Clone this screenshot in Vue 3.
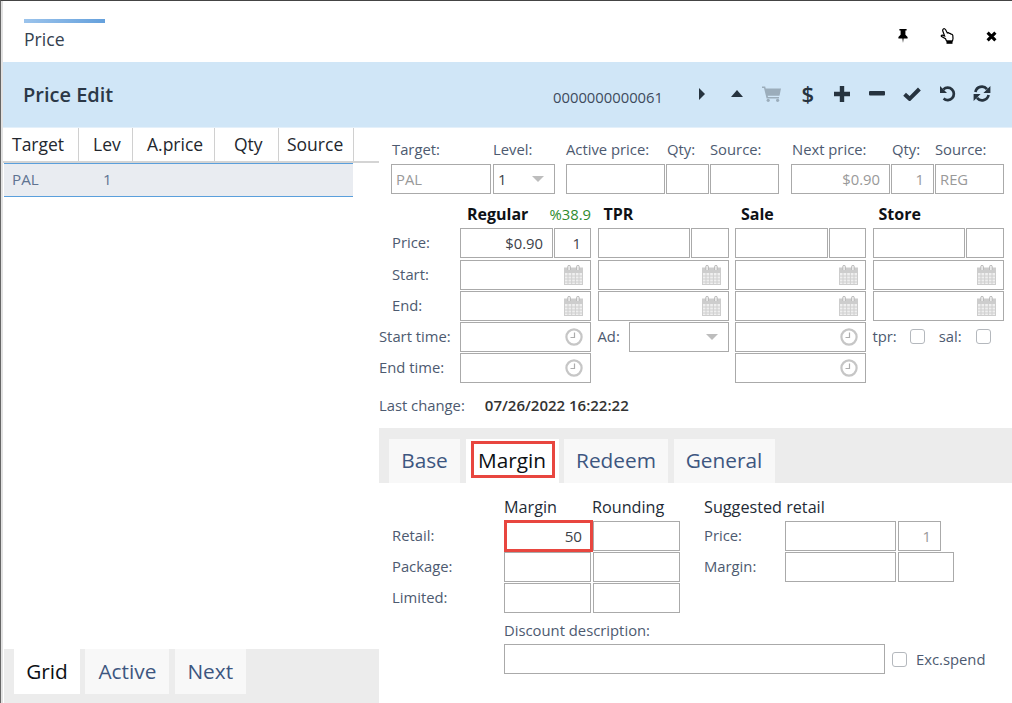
<template>
  <div class="window">
    <!-- shared icons -->
    <svg class="defs" width="0" height="0">
      <symbol id="cal" viewBox="0 0 19 20">
        <rect x="0.5" y="3" width="18" height="16.5" fill="#efefef" stroke="#cdcdcd" />
        <rect x="0" y="3" width="19" height="5" fill="#cdcdcd" />
        <path d="M4 8v11M7.7 8v11M11.4 8v11M15 8v11M1 11h17M1 14h17M1 17h17" stroke="#cfcfcf" fill="none" />
        <path d="M3.8 5V1.6a1.3 1.3 0 0 1 2.6 0V5M12.6 5V1.6a1.3 1.3 0 0 1 2.6 0V5" stroke="#b9b9b9" fill="#efefef" />
      </symbol>
      <symbol id="clock" viewBox="0 0 18 18">
        <circle cx="9" cy="9" r="7.6" fill="#fff" stroke="#c6c6c6" stroke-width="2.2" />
        <path d="M9.5 4.5v5H5.5" fill="none" stroke="#adadad" stroke-width="1.2" />
      </symbol>
    </svg>

    <div class="titlebar">
      <div class="title-tab">Price</div>
      <div class="win-icons">
        <span class="win-icon">
          <svg width="10" height="14" viewBox="0 0 10 14"><path d="M1.4 0h7.2v1.5H7.4v4.3l2.2 2.1v1.5H5.6L5 14l-.6-4.6H.4V7.9l2.2-2.1V1.5H1.4z" fill="#000" /></svg>
        </span>
        <span class="win-icon">
          <svg width="14" height="16" viewBox="0 0 14 16">
            <path d="M3.2 1.2C4 .4 5 .6 5.5 1.6L7.3 5c.7-.4 1.5-.2 1.9.4.7-.2 1.4.1 1.7.7.8-.1 1.7.4 1.9 1.3l.2 3.1-.5 2.5h-6l-1-2.2-3.9-2.2c-.7-.6-.2-1.6.7-1.5l2.3.9-1.8-5c-.3-.8-.1-1.3.4-1.8z" fill="#fff" stroke="#000" stroke-width="1.2" />
            <rect x="6.5" y="12.6" width="6" height="3.2" fill="#000" />
          </svg>
        </span>
        <span class="win-icon">
          <svg width="11" height="11" viewBox="0 0 11 11"><path d="M1.6 1.6l7.8 7.8M9.4 1.6L1.6 9.4" stroke="#000" stroke-width="3.1" fill="none" /></svg>
        </span>
      </div>
    </div>

    <div class="head">
      <div class="head-title">Price Edit</div>
      <div class="head-number">0000000000061</div>
      <div class="tools">
        <span class="tool"><svg width="6" height="12" viewBox="0 0 6 12"><path d="M0 0l6 6-6 6z" fill="#26333f" /></svg></span>
        <span class="tool"><svg width="12" height="7" viewBox="0 0 12 7"><path d="M0 7l6-7 6 7z" fill="#26333f" /></svg></span>
        <span class="tool">
          <svg width="19" height="16" viewBox="0 0 19 16"><path d="M0 .5h3.2l.5 2H19l-1.5 7.2H5.7l.3 1.4h11v1.4H4.6L2 1.9H0z" fill="#9badbb" /><circle cx="6.2" cy="14.3" r="1.6" fill="#9badbb" /><circle cx="15.6" cy="14.3" r="1.6" fill="#9badbb" /></svg>
        </span>
        <span class="tool dollar">$</span>
        <span class="tool"><svg width="16" height="16" viewBox="0 0 16 16"><path d="M8 0v16M0 8h16" stroke="#26333f" stroke-width="4.4" fill="none" /></svg></span>
        <span class="tool"><svg width="16" height="5" viewBox="0 0 16 5"><rect width="16" height="4.6" rx="1" fill="#26333f" /></svg></span>
        <span class="tool"><svg width="18" height="14" viewBox="0 0 18 14"><path d="M1.6 7.2l5 4.6L16.4 2" stroke="#26333f" stroke-width="4" fill="none" /></svg></span>
        <span class="tool">
          <svg width="17" height="17" viewBox="0 0 17 17"><path d="M4.4 4.4a6.2 6.2 0 1 1 .2 9.2" stroke="#26333f" stroke-width="2.7" fill="none" /><path d="M1 1v7h7z" fill="#26333f" /></svg>
        </span>
        <span class="tool">
          <svg width="18" height="17" viewBox="0 0 18 17"><path d="M2.4 7A6.6 6.6 0 0 1 14 4.2M15.6 10A6.6 6.6 0 0 1 4 12.8" stroke="#26333f" stroke-width="2.7" fill="none" /><path d="M17.4 1v7h-7zM.6 16V9h7z" fill="#26333f" /></svg>
        </span>
      </div>
    </div>

    <div class="main">
      <div class="left">
        <div class="grid-head">
          <div v-for="c in gridCols" :key="c.name" class="grid-cell" :style="{ width: c.width + 'px', paddingLeft: c.pad + 'px' }">{{ c.name }}</div>
        </div>
        <div class="grid-row">
          <span class="row-target">PAL</span>
          <span class="row-level">1</span>
        </div>
        <div class="tabbar left-tabs">
          <div v-for="t in leftTabs" :key="t.name" class="tab" :class="{ active: t.active }" :style="{ width: t.width + 'px' }">{{ t.name }}</div>
        </div>
      </div>

      <div class="right">
        <div class="top-row">
          <div class="field w100 ml12 lab1"><div class="label">Target:</div><div class="box muted">PAL</div></div>
          <div class="field w62 ml2">
            <div class="label">Level:</div>
            <div class="box">1<svg class="arrow" width="12" height="6" viewBox="0 0 12 6"><path d="M0 0h12L6 6z" fill="#bdbdbd" /></svg></div>
          </div>
          <div class="field w99 ml11"><div class="label">Active price:</div><div class="box"></div></div>
          <div class="field w43 ml1 lab1"><div class="label">Qty:</div><div class="box"></div></div>
          <div class="field w69 ml1"><div class="label">Source:</div><div class="box"></div></div>
          <div class="field w99 ml12 lab1"><div class="label">Next price:</div><div class="box muted end">$0.90</div></div>
          <div class="field w43 ml1 lab1"><div class="label">Qty:</div><div class="box muted end">1</div></div>
          <div class="field w69 ml1"><div class="label">Source:</div><div class="box muted">REG</div></div>
        </div>

        <div class="price-grid">
          <div></div>
          <div class="col-head first"><b>Regular</b><span class="pct">%38.9</span></div>
          <div class="col-head"><b>TPR</b></div>
          <div class="col-head"><b>Sale</b></div>
          <div class="col-head"><b>Store</b></div>

          <div class="label pad">Price:</div>
          <div v-for="(p, i) in prices" :key="i" class="pair">
            <div class="box end grow">{{ p.price }}</div>
            <div class="box end" :style="{ width: p.qtyWidth + 'px' }">{{ p.qty }}</div>
          </div>

          <template v-for="row in ['Start:', 'End:']" :key="row">
            <div class="label pad">{{ row }}</div>
            <div v-for="n in 4" :key="n" class="box"><svg class="cal"><use href="#cal" /></svg></div>
          </template>

          <div class="label">Start time:</div>
          <div class="box"><svg class="clock"><use href="#clock" /></svg></div>
          <div class="ad">
            <span class="label">Ad:</span>
            <div class="box ad-select"><svg class="arrow" width="12" height="6" viewBox="0 0 12 6"><path d="M0 0h12L6 6z" fill="#bdbdbd" /></svg></div>
          </div>
          <div class="box"><svg class="clock"><use href="#clock" /></svg></div>
          <div class="flags">
            <span class="label">tpr:</span><span class="check flag-a"></span>
            <span class="label flag-b">sal:</span><span class="check flag-c"></span>
          </div>

          <div class="label">End time:</div>
          <div class="box"><svg class="clock"><use href="#clock" /></svg></div>
          <div></div>
          <div class="box"><svg class="clock"><use href="#clock" /></svg></div>
          <div></div>
        </div>

        <div class="last-change">
          <span class="label">Last change:</span>
          <span class="stamp">07/26/2022 16:22:22</span>
        </div>

        <div class="tabbar right-tabs">
          <div v-for="t in rightTabs" :key="t.name" class="tab" :class="{ active: t.active, marked: t.active }" :style="{ width: t.width + 'px' }">{{ t.name }}</div>
        </div>

        <div class="lower">
          <div class="margin-grid">
            <div></div>
            <div class="sub-head">Margin</div>
            <div class="sub-head shift">Rounding</div>

            <div class="label pad">Retail:</div>
            <div class="box end marked-box">50</div>
            <div class="box"></div>

            <div class="label pad">Package:</div>
            <div class="box"></div>
            <div class="box"></div>

            <div class="label pad">Limited:</div>
            <div class="box"></div>
            <div class="box"></div>
          </div>

          <div class="suggest-grid">
            <div class="sub-head wide">Suggested retail</div>

            <div class="label">Price:</div>
            <div class="box"></div>
            <div class="box muted end qty-short">1</div>

            <div class="label">Margin:</div>
            <div class="box"></div>
            <div class="box"></div>
          </div>
        </div>

        <div class="discount">
          <div class="label">Discount description:</div>
          <div class="discount-row">
            <div class="box discount-input"></div>
            <span class="check"></span>
            <span class="label exc">Exc.spend</span>
          </div>
        </div>
      </div>
    </div>
  </div>
</template>

<script setup>
const gridCols = [
  { name: 'Target', width: 76, pad: 9 },
  { name: 'Lev', width: 54, pad: 14 },
  { name: 'A.price', width: 82, pad: 14 },
  { name: 'Qty', width: 64, pad: 19 },
  { name: 'Source', width: 75, pad: 8 }
]

const leftTabs = [
  { name: 'Grid', width: 66, active: true },
  { name: 'Active', width: 84 },
  { name: 'Next', width: 71 }
]

const rightTabs = [
  { name: 'Base', width: 71 },
  { name: 'Margin', width: 93, active: true },
  { name: 'Redeem', width: 104 },
  { name: 'General', width: 101 }
]

const prices = [
  { price: '$0.90', qty: '1', qtyWidth: 37 },
  { price: '', qty: '', qtyWidth: 38 },
  { price: '', qty: '', qtyWidth: 37 },
  { price: '', qty: '', qtyWidth: 38 }
]
</script>

<style>
html,
body {
  margin: 0;
  background: #fff;
}
</style>

<style scoped>
.window {
  width: 1012px;
  height: 703px;
  box-sizing: border-box;
  border-top: 1px solid #444;
  border-left: 1px solid #666;
  padding-left: 2px;
  box-shadow: inset 2px 0 0 #e2e2e2;
  display: flex;
  flex-direction: column;
  font-family: "Open Sans", "Noto Sans", sans-serif;
  font-size: 14.8px;
  color: #4d5a70;
  background: #fff;
  overflow: hidden;
}

.defs {
  position: absolute;
}

.titlebar {
  height: 61px;
  flex: none;
  display: flex;
  justify-content: space-between;
  padding-left: 21px;
}

.title-tab {
  margin-top: 18px;
  width: 81px;
  height: 38px;
  box-sizing: border-box;
  padding-top: 5px;
  border-top: 4px solid #7fb0e3;
  border-image: linear-gradient(90deg, #9cc4ec, #64a0dc) 1;
  font-size: 17.6px;
  line-height: 22px;
  color: #34404e;
}

.win-icons {
  display: flex;
  margin-top: 13px;
  margin-right: -1px;
  height: 44px;
}

.win-icon {
  width: 44px;
  display: flex;
  align-items: center;
  justify-content: center;
}

.head {
  height: 65px;
  flex: none;
  display: flex;
  align-items: center;
  background: #d0e6f7;
  border-bottom: 1px solid #e4f0fa;
  padding-left: 20px;
}

.head-title {
  width: 530px;
  font-size: 20px;
  font-weight: 600;
  color: #2b3847;
}

.head-number {
  width: 131px;
  font-size: 14.8px;
  color: #3d4a5c;
  margin-top: 5px;
}

.tools {
  display: flex;
  margin-top: -2px;
}

.tool {
  width: 35.1px;
  height: 24px;
  display: flex;
  align-items: center;
  justify-content: center;
}

.dollar {
  font-size: 22px;
  font-weight: 600;
  color: #26333f;
  padding-left: 2px;
  box-sizing: border-box;
  margin-top: -1px;
}

.main {
  flex: 1;
  display: flex;
  min-height: 0;
}

.left {
  width: 376px;
  flex: none;
  display: flex;
  flex-direction: column;
}

.grid-head {
  display: flex;
  height: 33px;
  box-sizing: content-box;
  border-bottom: 2px solid #d4d4d4;
  font-size: 17.5px;
  color: #23272e;
}

.grid-cell {
  box-sizing: border-box;
  height: 33px;
  line-height: 33px;
  border-right: 1px solid #d0d0d0;
  white-space: nowrap;
}

.grid-row {
  width: 349px;
  height: 34px;
  margin-left: 1px;
  box-sizing: border-box;
  display: flex;
  align-items: center;
  padding-bottom: 2px;
  background: #e9ecf1;
  border-top: 1px solid #5a9fdc;
  border-bottom: 1px solid #5a9fdc;
  font-size: 15.2px;
  color: #5f7391;
}

.row-target {
  margin-left: 8px;
  width: 91px;
}

.tabbar {
  display: flex;
  background: #ececec;
  font-size: 20.8px;
  color: #3d5680;
  box-sizing: border-box;
}

.left-tabs {
  margin-top: auto;
  height: 54px;
  margin-left: 1px;
  padding-left: 10px;
  gap: 5.4px;
}

.left-tabs .tab {
  height: 45px;
  padding-bottom: 2px;
}

.tab {
  height: 44px;
  display: flex;
  align-items: center;
  justify-content: center;
  box-sizing: border-box;
  background: #f8f8f8;
  position: relative;
  white-space: nowrap;
}

.tab.active {
  background: #fff;
  color: #0c0f14;
}

.tab.marked::after {
  content: "";
  position: absolute;
  left: 5px;
  right: 4px;
  top: 2px;
  bottom: 5px;
  border: 3px solid #e8463f;
}

.right {
  flex: 1;
  min-width: 0;
}

.label {
  line-height: 20px;
  white-space: nowrap;
}

.pad {
  padding-left: 13px;
}

.box {
  height: 30px;
  box-sizing: border-box;
  border: 1px solid #aaa;
  display: flex;
  align-items: center;
  padding: 0 4px;
  color: #3c4148;
  background: #fff;
  white-space: nowrap;
}

.box.end {
  justify-content: flex-end;
  padding-right: 9px;
}

.box.muted {
  color: #999;
}

.top-row {
  display: flex;
  padding-top: 11px;
}

.field .label {
  margin-bottom: 5px;
}

.lab1 .label {
  padding-left: 1px;
}

.w100 { width: 100px; }
.w62 { width: 62px; }
.w99 { width: 99px; }
.w43 { width: 43px; }
.w69 { width: 69px; }
.ml1 { margin-left: 1px; }
.ml2 { margin-left: 2px; }
.ml11 { margin-left: 11px; }
.ml12 { margin-left: 12px; }

.arrow {
  margin-left: auto;
  margin-right: 6px;
}

.price-grid {
  display: grid;
  grid-template-columns: 74.5px repeat(4, 131px);
  column-gap: 6.5px;
  row-gap: 1.25px;
  margin-top: 9px;
  align-items: center;
}

.price-grid .label,
.margin-grid .label,
.suggest-grid .label {
  margin-top: -2px;
}

.col-head {
  height: 22px;
  line-height: 22px;
  padding-left: 6px;
  margin-bottom: 2px;
  font-size: 16px;
  color: #0e1116;
}

.col-head.first {
  display: flex;
  justify-content: space-between;
  padding-left: 7px;
}

.col-head b {
  font-weight: 700;
}

.pct {
  color: #2e8b2e;
  font-size: 14.8px;
}

.pair {
  display: flex;
  gap: 1px;
}

.grow {
  flex: 1;
}

.cal {
  width: 19px;
  height: 20px;
  margin-left: auto;
  margin-right: 3px;
}

.clock {
  width: 18px;
  height: 18px;
  margin-left: auto;
  margin-right: 3px;
}

.ad {
  display: flex;
  align-items: center;
  justify-content: space-between;
}

.ad-select {
  width: 100px;
}

.flags {
  display: flex;
  align-items: center;
  margin-top: -2px;
}

.flags .label {
  margin-top: 0;
}

.check {
  display: block;
  width: 15px;
  height: 15px;
  flex: none;
  box-sizing: border-box;
  border: 1.5px solid #b4b8bd;
  border-radius: 3px;
  background: #fff;
}

.flag-a {
  margin-left: 13px;
}

.flag-b {
  margin-left: 14px;
}

.flag-c {
  margin-left: 14px;
}

.last-change {
  display: flex;
  margin-top: 12px;
  height: 20px;
}

.stamp {
  margin-left: 20px;
  font-size: 15px;
  line-height: 20px;
  font-weight: 600;
  color: #333;
}

.right-tabs {
  margin-top: 13px;
  height: 55px;
  padding: 11px 0 0 10px;
}

.right-tabs .tab {
  padding-bottom: 2px;
}

.right-tabs .tab + .tab {
  margin-left: 5.5px;
}

.lower {
  display: flex;
  padding-top: 14px;
}

.margin-grid {
  display: grid;
  grid-template-columns: 123px 87px 87px;
  column-gap: 2px;
  row-gap: 1px;
  align-items: center;
}

.suggest-grid {
  display: grid;
  grid-template-columns: 79px 111px 56px;
  column-gap: 2px;
  row-gap: 1px;
  align-items: center;
  align-content: start;
  margin-left: 24px;
}

.sub-head {
  height: 20px;
  line-height: 20px;
  margin-bottom: 3px;
  font-size: 16.2px;
  color: #232b36;
  white-space: nowrap;
}

.shift {
  margin-left: -1px;
}

.wide {
  grid-column: 1 / -1;
}

.qty-short {
  width: 43px;
}

.marked-box {
  position: relative;
  font-weight: 500;
  font-size: 15.2px;
  padding-right: 8px !important;
}

.marked-box::after {
  content: "";
  position: absolute;
  left: -1px;
  right: -3px;
  top: -2px;
  bottom: -2px;
  border: 3px solid #e8463f;
}

.discount {
  margin-top: 7px;
  padding-left: 125px;
}

.discount .label {
  margin-bottom: 4px;
}

.discount-row {
  display: flex;
  align-items: center;
}

.discount-input {
  width: 381px;
  flex: none;
  margin-right: 7px;
}

.discount-row .exc {
  margin: 0 0 0 9px;
}
</style>
